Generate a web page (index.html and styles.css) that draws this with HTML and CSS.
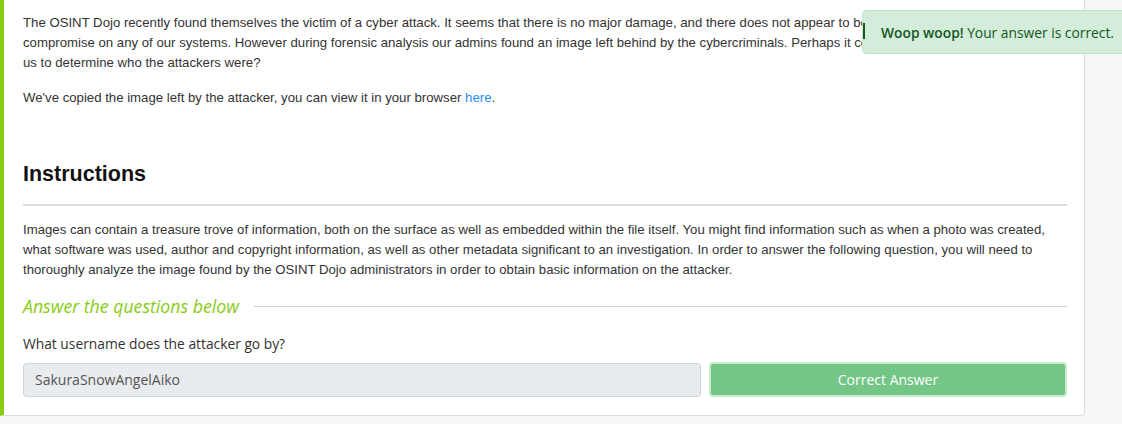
FILE: index.html
```html
<!DOCTYPE html>
<html>
<head>
<meta charset="utf-8">
<link rel="stylesheet" href="styles.css">
</head>
<body>
<div class="page">
  <div class="card">
    <p class="text first">The OSINT Dojo recently found themselves the victim of a cyber attack. It seems that there is no major damage, and there does not appear to be any other significant indicators of compromise on any of our systems. However during forensic analysis our admins found an image left behind by the cybercriminals. Perhaps it contains something that could help us to determine who the attackers were?</p>
    <p class="text">We've copied the image left by the attacker, you can view it in your browser <a class="link" href="#">here</a>.</p>
    <h3 class="heading">Instructions</h3>
    <hr class="rule">
    <p class="text">Images can contain a treasure trove of information, both on the surface as well as embedded within the file itself. You might find information such as when a photo was created, what software was used, author and copyright information, as well as other metadata significant to an investigation. In order to answer the following question, you will need to thoroughly analyze the image found by the OSINT Dojo administrators in order to obtain basic information on the attacker.</p>
    <div class="answers-title"><span>Answer the questions below</span><span class="line"></span></div>
    <div class="question">What username does the attacker go by?</div>
    <div class="answer-row">
      <div class="input">SakuraSnowAngelAiko</div>
      <button class="btn">Correct Answer</button>
    </div>
  </div>
</div>
<div class="toast"><span class="bar"></span><b>Woop woop!</b> Your answer is correct.</div>
</body>
</html>
```
FILE: styles.css
```css
html, body { margin: 0; padding: 0; }
body {
  background: #f8f8f8;
  width: 1122px;
  height: 424px;
  overflow: hidden;
  position: relative;
  font-family: "Liberation Sans", Arial, sans-serif;
}
.page { width: 1085px; }
.card {
  margin-top: -10px;
  background: #fff;
  border: 1px solid #dcdcdc;
  border-left: 4px solid #88cc14;
  border-radius: 0 0 4px 0;
  padding: 22px 17px 18px 19px;
}
.text {
  font-size: 13.2px;
  line-height: 20px;
  color: #333;
  margin: 15px 0 0;
}
.text.first { margin-top: 0; }
.link { color: #1f8fff; text-decoration: none; }
.heading {
  font-size: 21.5px;
  line-height: 26px;
  font-weight: bold;
  color: #111;
  margin: 53px 0 0;
}
.rule {
  border: 0;
  border-top: 2px solid #dedede;
  margin: 17px 0 14px;
}
.rule + .text { margin-top: 0; }
.answers-title {
  display: flex;
  align-items: center;
  gap: 15px;
  margin-top: 14px;
  font-family: "Open Sans", "Noto Sans", sans-serif;
  font-style: italic;
  font-size: 17.7px;
  line-height: 24px;
  color: #88cc14;
}
.answers-title .line { flex: 1; border-top: 1px solid #d0d0d0; }
.question {
  margin-top: 15px;
  font-family: "Open Sans", "Noto Sans", sans-serif;
  font-size: 13.8px;
  line-height: 22px;
  color: #333;
}
.answer-row {
  display: flex;
  gap: 8px;
  margin-top: 8px;
}
.input {
  flex: 0 0 678px;
  box-sizing: border-box;
  height: 34px;
  background: #e9ecef;
  border: 1px solid #ced4da;
  border-radius: 4px;
  padding: 0 11px;
  font-family: "Open Sans", "Noto Sans", sans-serif;
  font-size: 14px;
  line-height: 32px;
  color: #555;
}
.btn {
  flex: 1;
  height: 35px;
  margin-top: -1px;
  box-sizing: border-box;
  background: #73c686;
  border: 2px solid #c8ecd0;
  border-radius: 4px;
  color: #fff;
  font-family: "Open Sans", "Noto Sans", sans-serif;
  font-size: 14px;
}
.toast {
  position: absolute;
  top: 10px;
  left: 862px;
  width: 280px;
  height: 44px;
  box-sizing: border-box;
  background: #d4edda;
  border: 1px solid #c3e6cb;
  border-radius: 4px;
  padding: 0 0 0 18px;
  font-family: "Open Sans", "Noto Sans", sans-serif;
  font-size: 13.8px;
  line-height: 43px;
  color: #155724;
  white-space: nowrap;
}
.toast b { font-weight: 600; }
.toast .bar {
  position: absolute;
  left: 0;
  top: 12px;
  width: 2px;
  height: 16px;
  background: #155724;
}
```
